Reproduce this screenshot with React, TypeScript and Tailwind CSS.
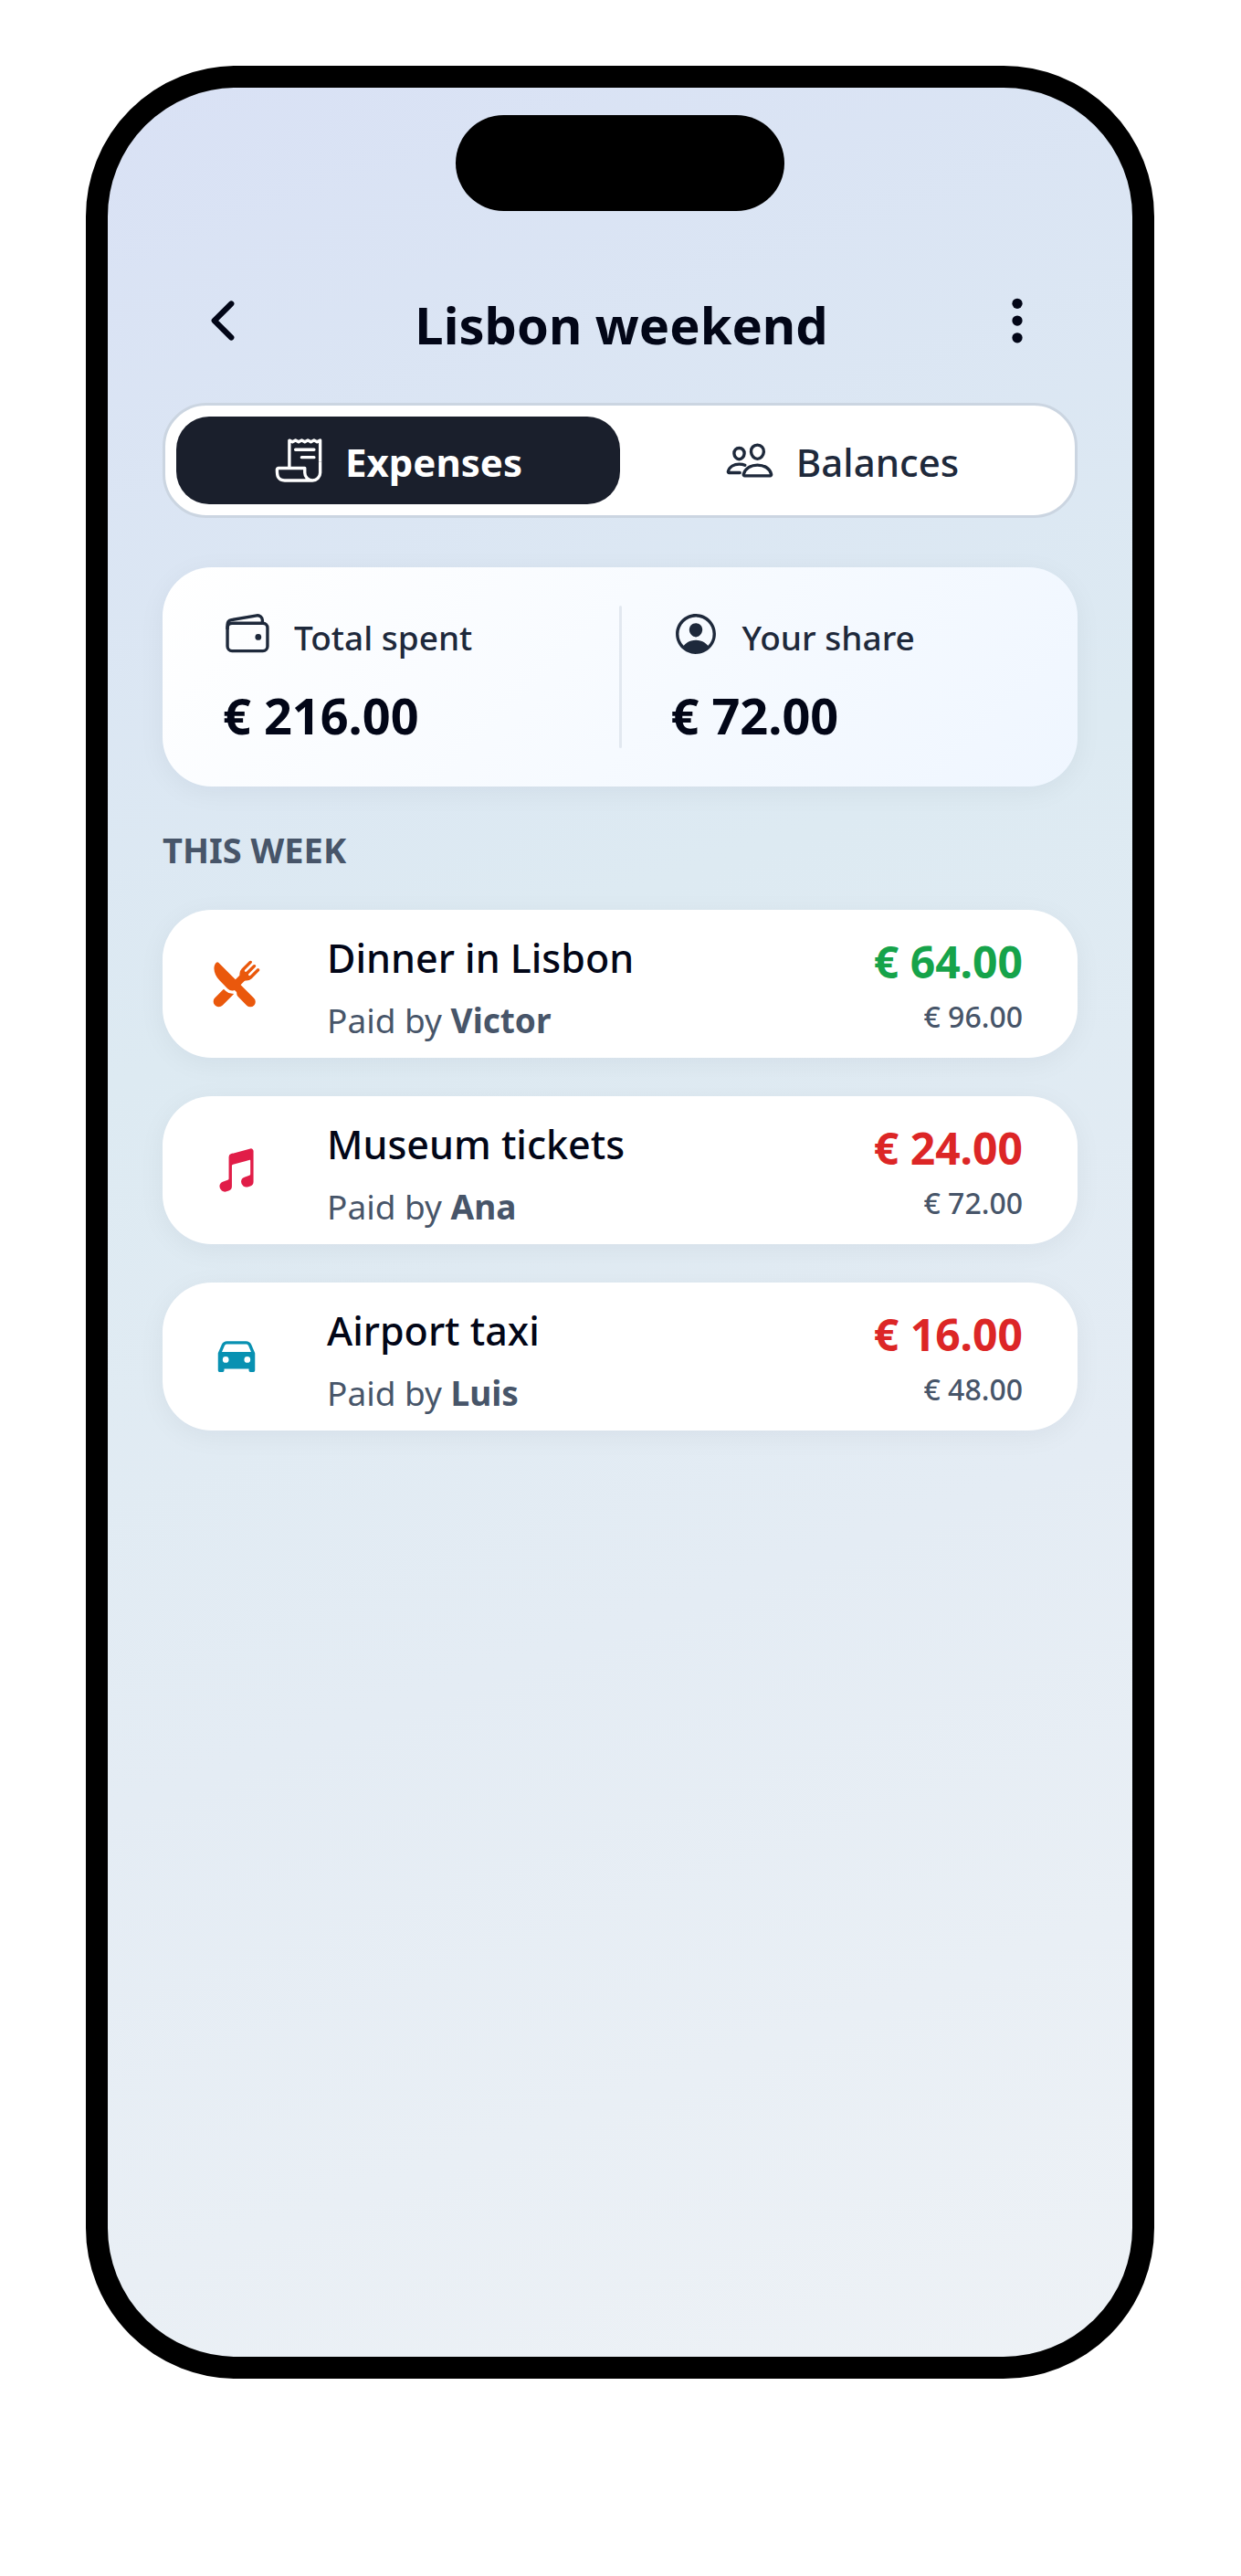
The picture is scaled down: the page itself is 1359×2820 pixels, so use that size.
import { useState } from "react";
import type { IconType } from "react-icons";
import {
  IoCar,
  IoChevronBack,
  IoEllipsisVertical,
  IoMusicalNotes,
  IoPeopleOutline,
  IoPersonCircleOutline,
  IoReceiptOutline,
  IoRestaurant,
  IoWalletOutline,
} from "react-icons/io5";

type Expense = {
  title: string;
  payer: string;
  share: string;
  total: string;
  icon: IconType;
  iconClass: string;
  shareClass: string;
};

const expenses: Expense[] = [
  {
    title: "Dinner in Lisbon",
    payer: "Victor",
    share: "€ 64.00",
    total: "€ 96.00",
    icon: IoRestaurant,
    iconClass: "text-[#ea580c]",
    shareClass: "text-[#16a34a]",
  },
  {
    title: "Museum tickets",
    payer: "Ana",
    share: "€ 24.00",
    total: "€ 72.00",
    icon: IoMusicalNotes,
    iconClass: "text-[#e11d48]",
    shareClass: "text-[#dc2626]",
  },
  {
    title: "Airport taxi",
    payer: "Luis",
    share: "€ 16.00",
    total: "€ 48.00",
    icon: IoCar,
    iconClass: "text-[#0891b2]",
    shareClass: "text-[#dc2626]",
  },
];

function Header() {
  return (
    <header className="flex items-center justify-between pl-[33px] pr-9">
      <button type="button" aria-label="Back">
        <IoChevronBack className="size-[66px]" />
      </button>
      <h1 className="pt-2 text-[56px] font-bold leading-[78px]">Lisbon weekend</h1>
      <button type="button" aria-label="More options">
        <IoEllipsisVertical className="size-[60px]" />
      </button>
    </header>
  );
}

function Tab({ label, icon: Icon, active, onSelect }: { label: string; icon: IconType; active: boolean; onSelect: () => void }) {
  return (
    <button
      type="button"
      role="tab"
      aria-selected={active}
      onClick={onSelect}
      className={
        active
          ? "flex h-24 items-center justify-center gap-6 rounded-[36px] bg-[#1a1f2c] font-bold text-white"
          : "flex h-24 items-center justify-center gap-6 rounded-[36px] font-medium text-[#1e293b]"
      }
    >
      <Icon className="size-[54px]" />
      <span className="pt-1 text-[42px] leading-[60px]">{label}</span>
    </button>
  );
}

function Stat({ label, value, icon: Icon }: { label: string; value: string; icon: IconType }) {
  return (
    <div>
      <div className="flex gap-6 text-[#1e293b]">
        <Icon className="size-[54px]" />
        <span className="text-[37px] font-medium leading-[62px]">{label}</span>
      </div>
      <p className="mt-[22px] text-[54px] font-bold leading-[64px]">{value}</p>
    </div>
  );
}

function ExpenseRow({ expense }: { expense: Expense }) {
  const Icon = expense.icon;
  return (
    <li className="flex items-center rounded-[54px] bg-white py-[7px] pl-[54px] pr-[60px] shadow-[0_6px_30px_rgba(15,23,42,0.05)]">
      <Icon className={`size-[54px] shrink-0 ${expense.iconClass}`} />
      <div className="ml-[72px] flex-1 pt-3">
        <h3 className="text-[43px] font-medium leading-[68px]">{expense.title}</h3>
        <p className="text-[37px] leading-[68px] text-[#475569]">
          Paid by <strong className="font-bold">{expense.payer}</strong>
        </p>
      </div>
      <div className="pt-3 text-right">
        <p className={`text-[48px] font-bold leading-[60px] ${expense.shareClass}`}>{expense.share}</p>
        <p className="text-[32px] font-medium leading-[60px] text-[#475569]">{expense.total}</p>
      </div>
    </li>
  );
}

export default function App() {
  const [tab, setTab] = useState<"expenses" | "balances">("expenses");
  return (
    <div className="min-h-screen bg-white pb-[72px] pl-[94px] pr-[95px] pt-[72px] font-['Noto_Sans',sans-serif] text-[#020617]">
      <div className="relative mx-auto aspect-[390/844] w-full max-w-[1170px] rounded-[165px] border-[24px] border-black bg-[linear-gradient(160deg,#d9e1f5_0%,#ddeaf2_38%,#e4ecf4_65%,#eef2f6_100%)] bg-origin-border">
        <div className="absolute left-1/2 top-[30px] h-[105px] w-[360px] -translate-x-1/2 rounded-full bg-black" />
        <main className="px-[60px] pt-[212px]">
          <Header />
          <div role="tablist" aria-label="View" className="mt-[47px] grid grid-cols-2 rounded-[48px] border-[3px] border-[#cbd5e1] bg-white p-3">
            <Tab label="Expenses" icon={IoReceiptOutline} active={tab === "expenses"} onSelect={() => setTab("expenses")} />
            <Tab label="Balances" icon={IoPeopleOutline} active={tab === "balances"} onSelect={() => setTab("balances")} />
          </div>
          <section className="mt-[54px] grid grid-cols-[1fr_3px_1fr] items-center rounded-[54px] bg-[linear-gradient(135deg,#ffffff_0%,#eff6ff_100%)] py-[42px] shadow-[0_6px_30px_rgba(15,23,42,0.05)]">
            <div className="pl-[66px]">
              <Stat label="Total spent" value="€ 216.00" icon={IoWalletOutline} />
            </div>
            <div className="h-[156px] rounded-full bg-[#e2e8f0]" />
            <div className="pl-[54px]">
              <Stat label="Your share" value="€ 72.00" icon={IoPersonCircleOutline} />
            </div>
          </section>
          <h2 className="mb-[39px] mt-[42px] text-[38px] font-bold leading-[54px] text-[#475569]">THIS WEEK</h2>
          <ul className="flex flex-col gap-[42px]">
            {expenses.map((expense) => (
              <ExpenseRow key={expense.title} expense={expense} />
            ))}
          </ul>
        </main>
      </div>
    </div>
  );
}
